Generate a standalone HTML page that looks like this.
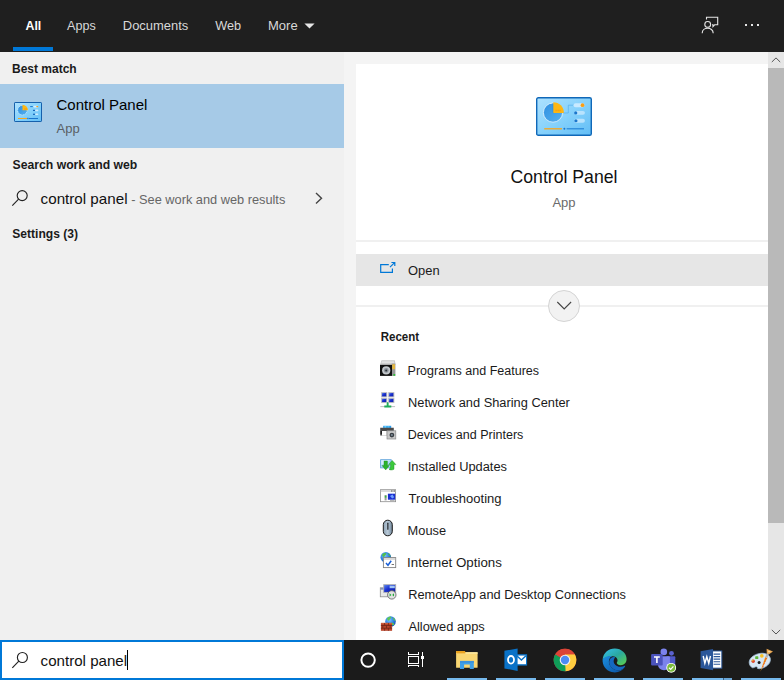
<!DOCTYPE html>
<html><head><meta charset="utf-8">
<style>
*{box-sizing:border-box;margin:0;padding:0}
html,body{width:784px;height:680px;overflow:hidden;background:#f4f4f4;font-family:"Liberation Sans","DejaVu Sans",sans-serif;color:#000}
.abs{position:absolute}
svg{position:absolute;overflow:visible}
#hdr{position:absolute;left:0;top:0;width:784px;height:52px;background:#1f1f1f}
.tab{position:absolute;top:18.2px;font-size:13px;color:#d8d8d8;line-height:16px;white-space:nowrap}
#left{position:absolute;left:0;top:52px;width:344px;height:588px;background:#f0f0f0}
.sec{position:absolute;left:12px;font-size:12px;margin-top:0.8px;font-weight:bold;color:#1a1a1a;line-height:16px;white-space:nowrap}
#sel{position:absolute;left:0;top:84px;width:344px;height:64px;background:#a6cae7}
#right{position:absolute;left:356px;top:64px;width:412px;height:576px;background:#fff}
.item{position:absolute;left:408px;font-size:12px;margin-top:0.9px;color:#1a1a1a;line-height:16px;white-space:nowrap}
#sb{position:absolute;left:768px;top:52px;width:16px;height:588px;background:#e6e6e6}
#task{position:absolute;left:0;top:640px;width:784px;height:40px;background:#1b1b1b}
#search{position:absolute;left:0;top:640px;width:344px;height:40px;background:#fff;border:2px solid #0078d7}
.ind{position:absolute;top:678px;height:2px;width:40px;background:#76b9ed}
</style><style id="fit">
#t1{transform:translateX(1.50px) scaleX(0.9506);transform-origin:0 0}
#t2{transform:translateX(1.10px) scaleX(0.9667);transform-origin:0 0}
#t3{transform:translateX(0.80px) scaleX(0.9970);transform-origin:0 0}
#t4{transform:translateX(1.20px) scaleX(0.9785);transform-origin:0 0}
#t5{transform:translateX(1.00px) scaleX(1.0000);transform-origin:0 0}
#s1{transform:translateX(0.00px) scaleX(1.0000);transform-origin:0 0}
#l1{transform:translateX(0.50px) scaleX(1.0000);transform-origin:0 0}
#l2{transform:translateX(0.50px) scaleX(1.0000);transform-origin:0 0}
#s2{transform:translateX(0.60px) scaleX(1.0163);transform-origin:0 0}
#l3{transform:translateX(0.60px) scaleX(1.0118);transform-origin:0 0}
#l4{transform:translateX(0.30px) scaleX(0.9822);transform-origin:0 0}
#s3{transform:translateX(0.30px) scaleX(1.0063);transform-origin:0 0}
#r1{transform:translateX(2.00px) scaleX(0.9298);transform-origin:50% 0}
#r2{transform:translateX(2.00px) scaleX(1.0821);transform-origin:50% 0}
#r3{transform:translateX(0.00px) scaleX(1.0333);transform-origin:0 0}
#r4{transform:translateX(0.70px) scaleX(0.9604);transform-origin:0 0}
#i1{transform:translateX(-0.40px) scaleX(1.0429);transform-origin:0 0}
#i2{transform:translateX(0.10px) scaleX(1.0684);transform-origin:0 0}
#i3{transform:translateX(-0.20px) scaleX(1.0433);transform-origin:0 0}
#i4{transform:translateX(-0.30px) scaleX(1.0710);transform-origin:0 0}
#i5{transform:translateX(0.60px) scaleX(1.0861);transform-origin:0 0}
#i6{transform:translateX(-0.40px) scaleX(1.0667);transform-origin:0 0}
#i7{transform:translateX(-0.90px) scaleX(1.1097);transform-origin:0 0}
#i8{transform:translateX(0.20px) scaleX(1.0667);transform-origin:0 0}
#i9{transform:translateX(0.40px) scaleX(1.0695);transform-origin:0 0}
#q1{transform:translateX(0.60px) scaleX(1.0071);transform-origin:0 0}
</style></head><body>
<div id="hdr">
 <div class="tab" id="t1" style="left:24px;color:#fff;font-weight:bold">All</div>
 <div class="tab" id="t2" style="left:66px">Apps</div>
 <div class="tab" id="t3" style="left:122px">Documents</div>
 <div class="tab" id="t4" style="left:214px">Web</div>
 <div class="tab" id="t5" style="left:267px">More</div>
 <div class="abs" style="left:13px;top:47px;width:40px;height:4px;background:#0078d7"></div>
 <svg style="left:304px;top:23px" width="12" height="6" viewBox="0 0 12 6"><path d="M0.4 0.4 L10.6 0.4 L5.5 5.4 Z" fill="#e6e6e6"/></svg>
 <!-- feedback icon -->
 <svg style="left:700px;top:15px" width="20" height="20" viewBox="0 0 20 20" fill="none" stroke="#e6e6e6" stroke-width="1.1">
  <path d="M6.5 4.5 V2.3 H17.7 V9.8 H14.6 L13 11.6 V9.8 H12"/>
  <circle cx="7.7" cy="9.4" r="2.9"/>
  <path d="M2.2 18.2 C2.2 11.6 13.2 11.6 13.2 18.2"/>
 </svg>
 <div class="abs" style="left:745px;top:24px;width:2px;height:2px;background:#e6e6e6"></div>
 <div class="abs" style="left:751px;top:24px;width:2px;height:2px;background:#e6e6e6"></div>
 <div class="abs" style="left:757px;top:24px;width:2px;height:2px;background:#e6e6e6"></div>
</div>
<div id="left"></div>
<div class="sec" id="s1" style="top:60px">Best match</div>
<div id="sel"></div>
<svg width="0" height="0" style="position:absolute"><defs>
<linearGradient id="cpg" x1="0" y1="0" x2="1" y2="1"><stop offset="0" stop-color="#aee2ff"/><stop offset="0.55" stop-color="#83d0fb"/><stop offset="1" stop-color="#62bdf5"/></linearGradient>
<linearGradient id="pieg" x1="0" y1="0" x2="1" y2="1"><stop offset="0" stop-color="#2f8fe0"/><stop offset="1" stop-color="#55b0f0"/></linearGradient>

</defs></svg>
<svg style="left:14px;top:102px" width="28" height="20" viewBox="0 0 28 20">
 <rect x="0.5" y="0.5" width="27" height="19" rx="0.6" fill="url(#cpg)" stroke="#1560ac" stroke-width="1"/>
 <circle cx="8.4" cy="8.2" r="4.7" fill="url(#pieg)" stroke="#eaf7ff" stroke-width="0.7" stroke-dasharray="1 0.8"/>
 <path d="M8.5 8.3 V2.8 A5.5 5.5 0 0 1 14 8.3 Z" fill="#fdb714"/>
 <path d="M10 7 h3" stroke="#f59a0b" stroke-width="1"/>
 <rect x="16.2" y="4" width="2.6" height="1.1" fill="#1f7fd4"/><rect x="19.4" y="3.8" width="4.8" height="1.6" rx="0.8" fill="#d8f0ff"/><rect x="22.2" y="3.9" width="2.1" height="1.4" rx="0.7" fill="#fb9f14"/>
 <rect x="19" y="7.8" width="2.1" height="1.2" fill="#1565b8"/><rect x="21.1" y="7.6" width="3.2" height="1.6" rx="0.8" fill="#d0ecff"/>
 <rect x="19" y="11.7" width="2.1" height="1.2" fill="#1565b8"/><rect x="21.1" y="11.5" width="3.2" height="1.6" rx="0.8" fill="#d0ecff"/>
 <rect x="4" y="16" width="9" height="1" fill="#f9a51a"/><rect x="13.3" y="15.8" width="1.2" height="1.3" fill="#1565b8"/><rect x="15" y="16" width="9" height="1" fill="#1a74cc"/>
</svg>
<div class="abs" id="l1" style="left:56px;top:96px;font-size:15px;line-height:18px;color:#000;white-space:nowrap">Control Panel</div>
<div class="abs" id="l2" style="left:56px;top:121px;font-size:13px;line-height:16px;color:#5a5f64;white-space:nowrap">App</div>
<div class="sec" id="s2" style="top:156px">Search work and web</div>
<svg style="left:11px;top:189px" width="18" height="18" viewBox="0 0 18 18" fill="none" stroke="#222" stroke-width="1.15"><circle cx="11.2" cy="6.6" r="5"/><path d="M7.6 10.2 L1.3 16.6"/></svg>
<div class="abs" id="l3" style="left:40px;top:190px;font-size:15px;line-height:18px;color:#111;white-space:nowrap">control panel</div>
<div class="abs" id="l4" style="left:131px;top:192px;font-size:13px;line-height:16px;color:#666;white-space:nowrap">- See work and web results</div>
<svg style="left:314px;top:192px" width="10" height="12" viewBox="0 0 10 12" fill="none" stroke="#444" stroke-width="1.4"><path d="M2 1 L7.5 6.2 L2 11.4"/></svg>
<div class="sec" id="s3" style="top:225px">Settings (3)</div>

<div id="right"></div>
<svg style="left:536px;top:97px" width="56" height="39" viewBox="0 0 56 39">
 <rect x="0.7" y="0.7" width="54.6" height="37.6" rx="1.6" fill="url(#cpg)" stroke="#1068b8" stroke-width="1.4"/>
 <circle cx="17" cy="15.6" r="9.6" fill="url(#pieg)" stroke="#e8f6ff" stroke-width="0.8"/>
 <path d="M17 15.6 L17 6 M17 15.6 L26.5 15.6" stroke="#2580d0" stroke-width="0.5"/>
 <path d="M17.3 15.9 V5.2 A10.6 10.6 0 0 1 27.9 15.9 Z" fill="#fdb714"/>
 <path d="M19.5 13.5 h6" stroke="#f59a0b" stroke-width="1.6" stroke-dasharray="1.2 0.8"/>
 <path d="M27.6 16 H32.3 V8.2 H37.6" fill="none" stroke="#4ea9ea" stroke-width="0.6"/>
 <rect x="37.6" y="6.3" width="10.9" height="3.9" rx="1.95" fill="#c9eaff"/>
 <circle cx="46.5" cy="8.2" r="1.9" fill="#fb9f14"/>
 <rect x="38" y="13.9" width="10.9" height="3.9" rx="1.95" fill="#b9e3fd"/>
 <circle cx="39.7" cy="15.9" r="1.6" fill="#1a76cc"/>
 <rect x="38" y="21.8" width="10.9" height="3.9" rx="1.95" fill="#b9e3fd"/>
 <circle cx="39.9" cy="23.75" r="1.6" fill="#1a76cc"/>
 <path d="M8.2 31.8 H26" stroke="#f9a51a" stroke-width="1.3"/>
 <circle cx="28.4" cy="31.8" r="1" fill="#1a76cc"/>
 <path d="M30.6 31.8 H48" stroke="#1f7fd4" stroke-width="1.1"/>
</svg>
<div class="abs" id="r1" style="left:356px;top:165.6px;width:412px;text-align:center;font-size:19px;line-height:22px;color:#111;white-space:nowrap">Control Panel</div>
<div class="abs" id="r2" style="left:356px;top:195px;width:412px;text-align:center;font-size:12px;line-height:16px;color:#6a6a6a">App</div>
<div class="abs" style="left:356px;top:240px;width:412px;height:2px;background:#f0f0f0"></div>
<div class="abs" style="left:356px;top:254px;width:412px;height:32px;background:#e6e6e6"></div>
<svg style="left:379px;top:261px" width="18" height="14" viewBox="0 0 18 14" fill="none" stroke="#0078d7" stroke-width="1.2"><path d="M9.8 3.7 H1.7 V11.4 H13.4 V7.4"/><path d="M11 6.2 L15.6 1.6 M12.4 1.5 H15.8 V4.9"/></svg>
<div class="item" id="r3" style="top:262.1px;font-size:12.5px">Open</div>
<div class="abs" style="left:356px;top:305px;width:412px;height:2px;background:#f0f0f0"></div>
<div class="abs" style="left:548px;top:290px;width:32px;height:32px;border-radius:16px;background:#f2f2f2;border:1px solid #d4d4d4"></div>
<svg style="left:556px;top:300px" width="16" height="12" viewBox="0 0 16 12" fill="none" stroke="#444" stroke-width="1.1"><path d="M1.3 2 L8.2 9 L15.1 2"/></svg>
<div class="abs" id="r4" style="left:380px;top:329px;font-size:12px;font-weight:bold;line-height:16px;color:#1a1a1a;white-space:nowrap">Recent</div>
<div class="item" id="i1" style="top:362px">Programs and Features</div>
<div class="item" id="i2" style="top:394px">Network and Sharing Center</div>
<div class="item" id="i3" style="top:426px">Devices and Printers</div>
<div class="item" id="i4" style="top:458px">Installed Updates</div>
<div class="item" id="i5" style="top:490px">Troubleshooting</div>
<div class="item" id="i6" style="top:522px">Mouse</div>
<div class="item" id="i7" style="top:554px">Internet Options</div>
<div class="item" id="i8" style="top:586px">RemoteApp and Desktop Connections</div>
<div class="item" id="i9" style="top:618px">Allowed apps</div>
<svg width="0" height="0" style="position:absolute"><defs>
<radialGradient id="glb" cx="0.4" cy="0.35" r="0.7"><stop offset="0" stop-color="#7fc4ff"/><stop offset="0.6" stop-color="#2a7fe0"/><stop offset="1" stop-color="#1650b0"/></radialGradient>
<linearGradient id="msg" x1="0" y1="0" x2="1" y2="0"><stop offset="0" stop-color="#8fa3b5"/><stop offset="0.5" stop-color="#b9cad8"/><stop offset="1" stop-color="#6f8599"/></linearGradient>
<linearGradient id="scr" x1="0" y1="0" x2="1" y2="1"><stop offset="0" stop-color="#5f8cf0"/><stop offset="0.45" stop-color="#1a30d0"/><stop offset="1" stop-color="#0a1a9a"/></linearGradient>
</defs></svg>
<!-- Programs and Features -->
<svg style="left:380px;top:360px" width="16" height="16" viewBox="0 0 16 16">
 <path d="M1.5 0.3 H14.8 L15.6 4.8 H0 Z" fill="#c9c9c9"/>
 <path d="M2 1.2 H14 L14.4 3.2 H1.4 Z" fill="#e3e3e3"/>
 <rect x="11.8" y="3.6" width="3.6" height="12.3" fill="#9a9a9a"/>
 <rect x="12.3" y="4.2" width="2.6" height="5" fill="#e8b83a"/>
 <rect x="13.4" y="14" width="1.8" height="1.8" fill="#2fbf3a"/>
 <rect x="0" y="4.8" width="12" height="11.1" fill="#111"/>
 <circle cx="6.2" cy="10.4" r="4.1" fill="#c4c8cc"/>
 <circle cx="6.2" cy="10.4" r="2.4" fill="#8e959c"/>
 <circle cx="6.2" cy="10.4" r="1" fill="#30363c"/>
</svg>
<!-- Network and Sharing -->
<svg style="left:380px;top:392px" width="16" height="16" viewBox="0 0 16 16">
 <rect x="0.3" y="14.2" width="14.8" height="0.9" fill="#b8b8b8"/>
 <path d="M6.7 10 H8.6 V13.4 H11.3 V15.6 H4.3 V13.4 H6.7 Z" fill="#1fae5a"/>
 <g stroke="#c0c0c0" stroke-width="0.9" fill="url(#scr)">
  <rect x="1.6" y="0.6" width="5.2" height="4.3"/><rect x="8.7" y="0.6" width="5.2" height="4.3"/>
  <rect x="1.6" y="6.3" width="5.2" height="4.3"/><rect x="8.7" y="6.3" width="5.2" height="4.3"/>
 </g>
</svg>
<!-- Devices and Printers -->
<svg style="left:380px;top:424px" width="16" height="16" viewBox="0 0 16 16">
 <rect x="3.2" y="1.8" width="8" height="3" fill="#2a9df0"/>
 <rect x="4.4" y="2.2" width="2" height="1.6" fill="#7fe0ff"/><rect x="7.4" y="2.2" width="2" height="1.6" fill="#55c8ff"/>
 <path d="M0.2 3.8 H13.8 V7 H7 V11.6 H0.2 Z" fill="#4a4a4a"/>
 <rect x="2" y="7" width="4.8" height="4.6" fill="#fff"/>
 <rect x="0.6" y="7" width="1.4" height="3" fill="#222"/>
 <rect x="7" y="6.8" width="8.8" height="8.2" fill="#c8c8c8" stroke="#8a8a8a" stroke-width="0.7"/>
 <circle cx="11.9" cy="11.1" r="2.4" fill="#3a3f45"/><circle cx="11.9" cy="11.1" r="1" fill="#7f8e9a"/>
</svg>
<!-- Installed Updates -->
<svg style="left:380px;top:456px" width="16" height="16" viewBox="0 0 16 16">
 <rect x="0.6" y="3.7" width="10.6" height="8.2" fill="#a9d6f7" stroke="#5b9fd8" stroke-width="0.8"/>
 <path d="M1.2 4.3 H10.6 L1.2 9 Z" fill="#d4ecfc"/>
 <path d="M4 5 H7.4 V9.6 H9.3 L5.7 13.9 L2.1 9.6 H4 Z" fill="#2cb32c" stroke="#178a17" stroke-width="0.4"/>
 <path d="M12.2 4.4 L15.9 8.6 H14 V13.2 C12.5 14.2 10.5 14.2 9 13.4 C10.4 12.6 10.6 11.5 10.6 8.6 H8.6 Z" fill="#3cc83c" stroke="#178a17" stroke-width="0.4"/>
</svg>
<!-- Troubleshooting -->
<svg style="left:380px;top:488px" width="16" height="16" viewBox="0 0 16 16">
 <rect x="0.4" y="1.7" width="15.2" height="12" fill="#fff" stroke="#8d8d8d" stroke-width="0.8"/>
 <rect x="0.8" y="2.1" width="14.4" height="1.8" fill="#d8d8d8"/>
 <rect x="11" y="2.5" width="1" height="1" fill="#555"/><rect x="12.5" y="2.5" width="1" height="1" fill="#555"/><rect x="14" y="2.5" width="1" height="1" fill="#555"/>
 <rect x="7.9" y="5.7" width="7.3" height="6" fill="#1a2fd0"/>
 <path d="M10 8 l2.6 -1.4 l1.6 2.6 l-2 1.4 z" fill="#6fa0ff"/>
 <rect x="4.6" y="7" width="2" height="5.4" fill="#9a9a9a"/><rect x="4.8" y="7.8" width="1.6" height="1.8" fill="#2fbf3a"/>
 <rect x="10" y="12" width="4.6" height="0.9" fill="#b0b0b0"/>
</svg>
<!-- Mouse -->
<svg style="left:380px;top:520px" width="16" height="16" viewBox="0 0 16 16">
 <rect x="3.3" y="0.2" width="9" height="15.6" rx="4.5" fill="url(#msg)" stroke="#1c1c1c" stroke-width="1"/>
 <rect x="7.2" y="2.6" width="1.3" height="7.2" rx="0.6" fill="#2a2f35"/>
</svg>
<!-- Internet Options -->
<svg style="left:380px;top:552px" width="16" height="16" viewBox="0 0 16 16">
 <circle cx="5.8" cy="5.2" r="5.3" fill="url(#glb)"/>
 <path d="M2 3 C3 1 5 0.8 6.5 1.4 C6 3 4.5 3.2 4.4 4.8 C3.2 5.2 2.4 4.4 2 3 Z M7.5 1.2 C9 1.5 10.4 2.8 10.8 4.2 C9.6 4.4 8.6 3.4 7.5 1.2 Z" fill="#4fbf4f"/>
 <rect x="3.4" y="5.6" width="12.3" height="10" fill="#fff" stroke="#808080" stroke-width="0.9"/>
 <rect x="3.9" y="6.1" width="11.3" height="1.7" fill="#d4d4d4"/>
 <path d="M6 11 L8 13.2 L11.2 8.8" fill="none" stroke="#1a5fd6" stroke-width="1.5"/>
 <rect x="11.6" y="12" width="2.4" height="0.9" fill="#666"/>
</svg>
<!-- RemoteApp -->
<svg style="left:380px;top:584px" width="16" height="16" viewBox="0 0 16 16">
 <rect x="0.3" y="3.8" width="8" height="9" fill="#e8e8e8" stroke="#8a8a8a" stroke-width="0.8"/>
 <rect x="0.8" y="4.3" width="7" height="1.2" fill="#5a6fb8"/>
 <rect x="3.7" y="0.6" width="12" height="7.8" fill="url(#scr)" stroke="#b4b4b4" stroke-width="0.9"/>
 <rect x="9.6" y="1.6" width="5.2" height="2.6" fill="#9fc4f5"/>
 <circle cx="11.8" cy="10.9" r="4.2" fill="#e2e2e2" stroke="#6a6a6a" stroke-width="0.9"/>
 <path d="M9.6 9.2 L11.4 10.9 L9.6 12.6 Z M14 9.2 L12.2 10.9 L14 12.6 Z" fill="#22a83a"/>
</svg>
<!-- Allowed apps -->
<svg style="left:380px;top:616px" width="16" height="16" viewBox="0 0 16 16">
 <circle cx="10.5" cy="5.5" r="5.3" fill="url(#glb)"/>
 <path d="M7 2.6 C8 1 10 0.6 11.4 1 C11 2.6 9.6 3 9.4 4.6 C8.2 5 7.4 4 7 2.6 Z M12.6 1.4 C14 2 15.2 3.2 15.5 4.8 C14.2 4.8 13.4 3.6 12.6 1.4 Z M11 7 C12.4 6.4 13.8 7 14.4 8.4 C13.4 9.6 12 9.6 11 7 Z" fill="#5fc84f"/>
 <rect x="0.9" y="6.9" width="11.2" height="7.9" fill="#b8442a"/>
 <path d="M0.9 9.5 H12.1 M0.9 12.2 H12.1 M4.6 6.9 V9.5 M8.4 6.9 V9.5 M2.8 9.5 V12.2 M6.5 9.5 V12.2 M10.2 9.5 V12.2 M4.6 12.2 V14.8 M8.4 12.2 V14.8" stroke="#6a2212" stroke-width="0.7" fill="none"/>
 <path d="M1.2 7.3 H4.2 M5 7.3 H8 M8.8 7.3 H11.8" stroke="#e07a55" stroke-width="0.6"/>
</svg>

<div id="sb">
 <div class="abs" style="left:0;top:16px;width:16px;height:455px;background:#b9b9b9"></div>
 <svg style="left:3px;top:5px" width="10" height="6" viewBox="0 0 10 6" fill="none" stroke="#555" stroke-width="1"><path d="M0.8 5 L5 0.9 L9.2 5"/></svg>
 <svg style="left:3px;top:577px" width="10" height="6" viewBox="0 0 10 6" fill="none" stroke="#555" stroke-width="1"><path d="M0.8 0.9 L5 5 L9.2 0.9"/></svg>
</div>
<div id="task"></div>
<div class="ind" style="left:447px"></div><div class="ind" style="left:496.2px"></div><div class="ind" style="left:545.3px"></div><div class="ind" style="left:594.2px"></div><div class="ind" style="left:643.4px"></div><div class="ind" style="left:692.3px"></div><div class="ind" style="left:741px"></div><div class="abs" style="left:722.6px;top:678px;width:1px;height:2px;background:#3a5f80"></div><div class="abs" style="left:723.6px;top:678px;width:8.7px;height:2px;background:#6aa6d6"></div>
<!-- cortana -->
<svg style="left:358px;top:650px" width="20" height="20" viewBox="0 0 20 20"><circle cx="10.1" cy="10.1" r="6.7" fill="none" stroke="#fff" stroke-width="2"/></svg>
<!-- task view -->
<svg style="left:406px;top:651px" width="20" height="18" viewBox="0 0 20 18" fill="none" stroke="#fff" stroke-width="1" shape-rendering="crispEdges">
 <rect x="2.5" y="5.5" width="10" height="7"/>
 <path d="M2.5 1 V3.5 H12.5 V1 M2.5 16 V14.5 H12.5 V16 M16.5 1 V16"/>
 <rect x="15" y="5" width="3" height="3" fill="#fff" stroke="none"/>
</svg>
<!-- explorer -->
<svg style="left:456px;top:651px" width="22" height="18" viewBox="0 0 22 18">
 <path d="M0.1 0 H8.6 L9.6 1.2 V3 H0.1 Z" fill="#eaa21e"/>
 <rect x="0.1" y="1.2" width="21.5" height="15.6" rx="0.6" fill="#f9d672"/>
 <rect x="0.1" y="1.2" width="21.5" height="1.6" fill="#fbe6a0"/>
 <path d="M0.1 0 H8.4 L9.4 1 V2.6 H0.1 Z" fill="#eaa21e"/>
 <path d="M4 18 V9.9 H17.8 V18 H13.8 V13.4 H8.1 V18 Z" fill="#3f9fe6"/>
 <rect x="4" y="9.9" width="13.8" height="2" fill="#3a92dc"/>
</svg>
<!-- outlook -->
<svg style="left:504px;top:648px" width="24" height="24" viewBox="0 0 24 24">
 <rect x="11.5" y="6.2" width="11.6" height="11.4" fill="#0a72c7"/>
 <rect x="12.8" y="7.6" width="9.2" height="8.6" fill="#fff"/>
 <path d="M12.8 7.8 L17.4 12 L22 7.8" fill="none" stroke="#0a72c7" stroke-width="1.4"/>
 <path d="M0.4 2.8 L13.6 0.4 V23 L0.4 20.4 Z" fill="#0a72c7"/>
 <ellipse cx="7" cy="11.8" rx="3" ry="3.8" fill="none" stroke="#fff" stroke-width="1.8"/>
</svg>
<!-- chrome -->
<svg style="left:553px;top:648px" width="24" height="24" viewBox="0 0 24 24">
 <circle cx="12" cy="12" r="11.3" fill="#db4437"/>
 <path d="M12 12 L2.2 6.35 A11.3 11.3 0 0 0 12.6 23.3 L17.6 14.9 Z" fill="#0f9d58"/>
 <path d="M12 12 L12.6 23.3 A11.3 11.3 0 0 0 21.8 6.35 H12 Z" fill="#ffcd40"/>
 <path d="M12 0.7 A11.3 11.3 0 0 1 21.8 6.35 H12 L7.1 9.2 L2.2 6.35 A11.3 11.3 0 0 1 12 0.7 Z" fill="#db4437"/>
 <circle cx="12" cy="12" r="5.3" fill="#f1f1f1"/>
 <circle cx="12" cy="12" r="4.2" fill="#4c8bf5"/>
</svg>
<!-- edge -->
<svg style="left:601.7px;top:647.6px" width="25" height="25" viewBox="0 0 25 25">
 <defs><linearGradient id="eg1" x1="0" y1="0" x2="1" y2="1"><stop offset="0" stop-color="#35c1f1"/><stop offset="0.5" stop-color="#2aa8a0"/><stop offset="1" stop-color="#5fd04a"/></linearGradient>
 <linearGradient id="eg2" x1="0" y1="0" x2="1" y2="1"><stop offset="0" stop-color="#1b8fe0"/><stop offset="1" stop-color="#0b4fa0"/></linearGradient></defs>
 <path d="M0.6 11.5 C1.2 4.8 6.4 0.4 12.8 0.4 C19.6 0.4 24.6 5.4 24.6 11 C24.6 15 21.8 17.2 18.8 17.2 C16 17.2 14.6 16 14.8 14.6 C16.6 12.6 15.2 8.4 10.8 8.2 C6 8 2 10.4 0.6 11.5 Z" fill="url(#eg1)"/>
 <path d="M0.6 11.5 C2 9 6.4 7.4 10.4 8.2 C6.8 9 6 14 8 17.6 C10 21.4 14.4 23.4 18.4 22.2 C20.4 21.6 22 20.4 23 18.8 C20 23.4 14.8 25.4 9.6 24 C3.6 22.4 0.2 17 0.6 11.5 Z" fill="url(#eg2)"/>
 <path d="M8 17.6 C10 21.4 14.4 23.4 18.4 22.2 C20.4 21.6 22 20.4 23 18.8 C23.4 18 22.8 17.6 22.2 18 C19.4 19.6 14.2 19 12.2 15.4 C11.2 13.6 11.6 11 13.2 9.4 C9.4 7.6 5.4 12.4 8 17.6 Z" fill="#1568c0"/>
</svg>
<!-- teams -->
<svg style="left:650px;top:647px" width="28" height="27" viewBox="0 0 28 27">
 <circle cx="21.5" cy="6.3" r="2.4" fill="#5b62d0"/>
 <circle cx="13.8" cy="4.9" r="3.3" fill="#7b83eb"/>
 <path d="M16.6 9.2 H24.2 C24.9 9.2 25.3 9.7 25.3 10.3 V16 C25.3 18.8 23.2 20.2 21.2 20.2 C19 20.2 16.6 18.8 16.6 16 Z" fill="#5059c9"/>
 <path d="M8 9.2 H18.8 C19.5 9.2 19.9 9.7 19.9 10.3 V17.6 C19.9 21.2 17.2 23.2 14 23.2 C10.8 23.2 8 21.2 8 17.6 Z" fill="#7b83eb"/>
 <rect x="1.1" y="7" width="11.6" height="11.6" rx="1" fill="#4b53bc"/>
 <path d="M4 10 H9.8 M6.9 10 V16" stroke="#fff" stroke-width="1.6" fill="none"/>
 <circle cx="21.2" cy="20.8" r="4.9" fill="#fff"/>
 <circle cx="21.2" cy="20.8" r="4" fill="#7cbb3c"/>
 <path d="M19 20.8 L20.7 22.4 L23.4 19.4" stroke="#fff" stroke-width="1.2" fill="none"/>
</svg>
<!-- word -->
<svg style="left:700.4px;top:647.7px" width="22.4" height="23.3" viewBox="0 0 24 25">
 <rect x="11" y="3.2" width="12.4" height="18.4" fill="#fff" stroke="#2b579a" stroke-width="1"/>
 <path d="M14.6 6.6 H21.6 M14.6 9.3 H21.6 M14.6 12 H21.6 M14.6 14.7 H21.6 M14.6 17.4 H21.6" stroke="#2b579a" stroke-width="1.2"/>
 <path d="M0.6 3.4 L14 1 V24 L0.6 21.4 Z" fill="#2b579a"/>
 <path d="M3.4 8.6 L5.2 16.4 L7.3 9.4 L9.4 16.4 L11.2 8.6" fill="none" stroke="#fff" stroke-width="1.5"/>
</svg>
<!-- paint -->
<svg style="left:748px;top:646px" width="32" height="28" viewBox="0 0 32 28">
 <g transform="rotate(-16 11.8 15)">
 <path d="M11.8 7.6 C18 7.6 22.6 10.8 22.6 15 C22.6 19.2 18 22.6 11.8 22.6 C10 22.6 8.6 22.2 7.6 21.6 C8.2 20.4 7.4 19.2 5.8 19.4 C4.4 19.6 3.4 20 2.6 19.2 C1.4 17.8 1 16.4 1 15 C1 10.8 5.4 7.6 11.8 7.6 Z" fill="#d6e6f4" stroke="#a5c0d8" stroke-width="0.7"/>
 </g>
 <circle cx="11.1" cy="16.6" r="1.5" fill="#1b1b1b"/>
 <circle cx="5.2" cy="15.2" r="1.7" fill="#e0452a"/><circle cx="4.6" cy="14.4" r="0.9" fill="#e8b030"/>
 <rect x="7.2" y="10.2" width="3.1" height="2.9" rx="0.7" fill="#5cb83a"/>
 <circle cx="13.8" cy="9.9" r="1.8" fill="#f7c024"/>
 <path d="M12.3 25.8 L17.2 11 L19.4 11.9 Z" fill="#f59a1a"/>
 <path d="M14.4 21 l1.2 -0.8 M15.4 18.4 l1.2 -0.8 M16.3 15.8 l1.3 -0.8 M17.2 13.3 l1.3 -0.8" stroke="#e8402a" stroke-width="1"/>
 <path d="M17.2 11 L19 6.8 L21 7.6 L19.4 11.9 Z" fill="#b4b4b4"/>
 <path d="M18.6 2.8 L25 5.4 L21 8.2 L18.8 7.2 Z" fill="#e8a550"/>
 <path d="M19.6 4.4 L22.8 5.6 L20.8 6.8 Z" fill="#f7dca0"/>
</svg>

<div id="search"></div>
<svg style="left:11px;top:651px" width="18" height="18" viewBox="0 0 18 18" fill="none" stroke="#222" stroke-width="1.15"><circle cx="11.4" cy="6.5" r="5"/><path d="M7.8 10.1 L1.3 16.8"/></svg>
<div class="abs" id="q1" style="left:40px;top:651.9px;font-size:15px;line-height:18px;color:#111;white-space:nowrap">control panel</div>
<div class="abs cursor" style="left:127px;top:650px;width:1px;height:20px;background:#000"></div>
</body></html>
